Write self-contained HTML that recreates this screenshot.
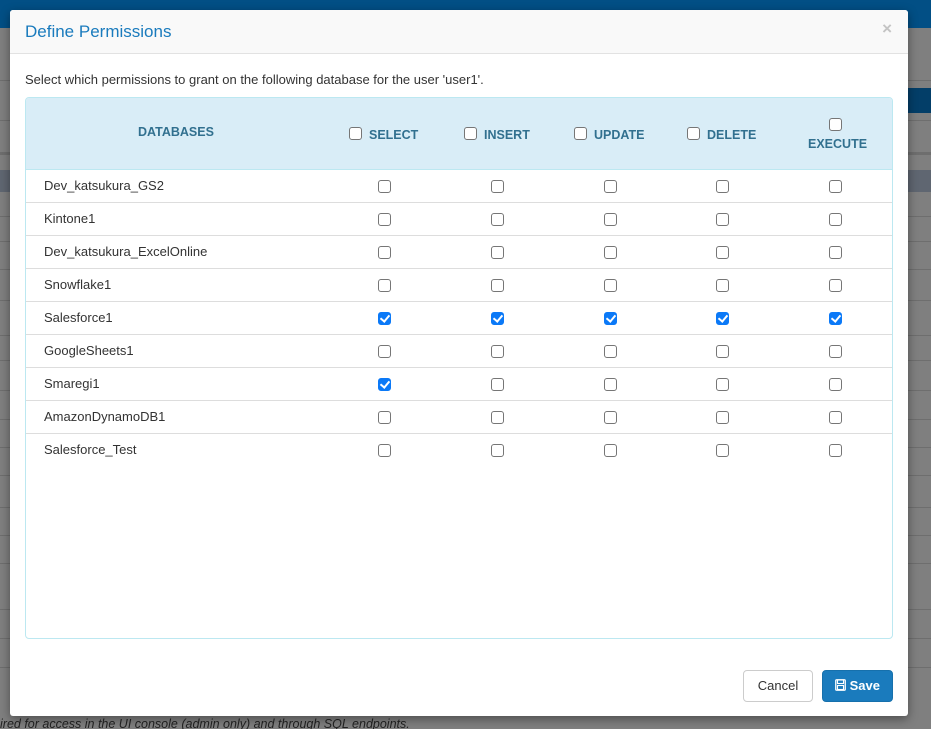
<!DOCTYPE html>
<html><head><style>
*{box-sizing:border-box;margin:0;padding:0}
html,body{width:931px;height:729px;overflow:hidden;background:#7f7f7f}
body{font-family:"Liberation Sans",Arial,sans-serif;position:relative}
.bg{position:absolute;left:0;top:0;width:931px;height:729px;background:#7f7f7f}
.top{position:absolute;left:0;top:0;width:931px;height:28px;background:#024f85}
.bl{position:absolute;left:0;width:931px;height:1px;background:#6e6e6e}
.band{position:absolute;left:908px;top:88px;width:23px;height:25px;background:#033e68}
.sel{position:absolute;left:0;top:170px;width:931px;height:22px;background:#5f6671}
.modal{position:absolute;left:10px;top:10px;width:898px;height:706px;background:#fff;border-radius:3px;box-shadow:0 3px 10px rgba(0,0,0,.4)}
.hdr{height:44px;border-bottom:1px solid #e2e2e2;background:#f9f9f9;border-radius:3px 3px 0 0;position:relative}
.hdr h4{position:absolute;left:15px;top:12px;font-size:17px;font-weight:normal;color:#1a7bbd}
.x{position:absolute;right:16px;top:9px;color:#c4c4c4;font-size:17px;font-weight:bold}
.desc{position:absolute;left:15px;top:62px;font-size:13px;color:#333}
.tbl{position:absolute;left:15px;top:87px;width:868px;height:542px;border:1px solid #bce8f1;border-radius:4px;overflow:hidden}
.th{height:72px;background:#d9edf7;border-bottom:1px solid #bce8f1;position:relative;font-size:12.5px;font-weight:bold;color:#31708f}
.th span{position:absolute}
.row{height:33px;border-bottom:1px solid #ddd;position:relative;font-size:13px;color:#333}
.row .n{position:absolute;left:18px;top:8px}
.cb{position:absolute;width:13px;height:13px;border:1px solid #767676;border-radius:3px;background:#fff}
.ck{background:#0b79f7;border-color:#0b79f7}
.ck::after{content:"";position:absolute;left:3px;top:0px;width:4px;height:7px;border:solid #fff;border-width:0 2px 2px 0;transform:rotate(40deg)}
.btn{position:absolute;top:660px;height:32px;border-radius:4px;font-size:13px;line-height:30px;text-align:center}
</style></head><body>
<div class="bg"></div>
<div class="top"></div>
<div class="band"></div>
<div class="bl" style="top:80px"></div>
<div class="bl" style="top:120px"></div>
<div class="bl" style="top:152px;height:3px"></div>
<div class="sel"></div>
<div class="bl" style="top:216px"></div>
<div class="bl" style="top:241px"></div>
<div class="bl" style="top:269px"></div>
<div class="bl" style="top:300px"></div>
<div class="bl" style="top:335px"></div>
<div class="bl" style="top:360px"></div>
<div class="bl" style="top:390px"></div>
<div class="bl" style="top:419px"></div>
<div class="bl" style="top:447px"></div>
<div class="bl" style="top:475px"></div>
<div class="bl" style="top:507px"></div>
<div class="bl" style="top:535px"></div>
<div class="bl" style="top:563px"></div>
<div class="bl" style="top:609px"></div>
<div class="bl" style="top:638px"></div>
<div class="bl" style="top:667px"></div>
<div style="position:absolute;left:0;top:717px;font-size:12.5px;font-style:italic;color:#222">ired for access in the UI console (admin only) and through SQL endpoints.</div>
<div class="modal">
<div class="hdr"><h4>Define Permissions</h4><span class="x">×</span></div>
<div class="desc">Select which permissions to grant on the following database for the user 'user1'.</div>
<div class="tbl">
<div class="th">
<span style="left:112px;top:27px">DATABASES</span>
<div class="cb" style="left:323px;top:29px"></div><span style="left:343px;top:30px">SELECT</span>
<div class="cb" style="left:438px;top:29px"></div><span style="left:458px;top:30px">INSERT</span>
<div class="cb" style="left:548px;top:29px"></div><span style="left:568px;top:30px">UPDATE</span>
<div class="cb" style="left:661px;top:29px"></div><span style="left:681px;top:30px">DELETE</span>
<div class="cb" style="left:803px;top:20px"></div><span style="left:782px;top:39px">EXECUTE</span>
</div>
<div id="rows"></div>
</div>
<div class="btn" style="left:733px;width:70px;border:1px solid #ccc;color:#333;background:#fff">Cancel</div>
<div class="btn" style="left:812px;width:71px;background:#1a7bbd;border:1px solid #1670ac;color:#fff;font-weight:bold"><svg width="11" height="12" viewBox="0 0 11 12" style="vertical-align:-1px"><rect x="0.75" y="0.75" width="9.5" height="10.5" rx="1" fill="none" stroke="#fff" stroke-width="1.3"/><rect x="2.5" y="1" width="6" height="3.5" fill="none" stroke="#fff" stroke-width="1.1"/><rect x="2.5" y="6.5" width="6" height="4" fill="none" stroke="#fff" stroke-width="1.1"/></svg> Save</div>
</div>
<script>
var names=["Dev_katsukura_GS2","Kintone1","Dev_katsukura_ExcelOnline","Snowflake1","Salesforce1","GoogleSheets1","Smaregi1","AmazonDynamoDB1","Salesforce_Test"];
var xs=[352,465,578,690,803];
var h="";
names.forEach(function(n,i){
h+='<div class="row"'+(i==8?' style="border-bottom:none"':'')+'><span class="n">'+n+'</span>';
xs.forEach(function(x,j){var c=(i==4)||(i==6&&j==0);h+='<div class="cb'+(c?' ck':'')+'" style="left:'+x+'px;top:10px"></div>';});
h+='</div>';});
document.getElementById("rows").innerHTML=h;
</script>
</body></html>
